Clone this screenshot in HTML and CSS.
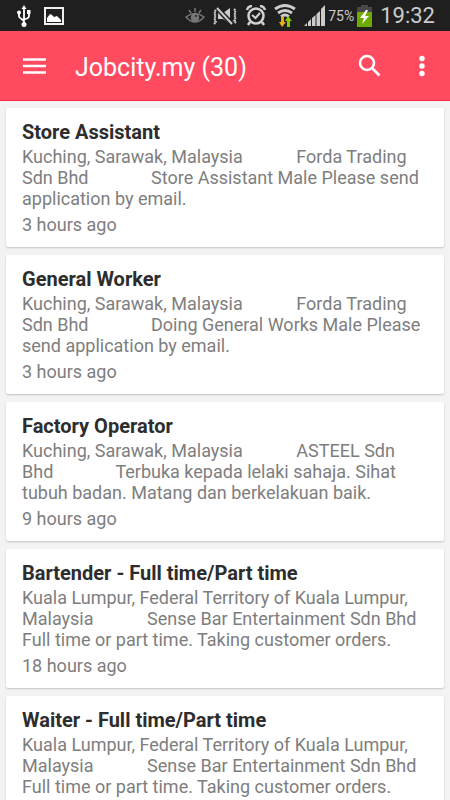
FILE: index.html
```html
<!DOCTYPE html>
<html lang="en">
<head>
<meta charset="utf-8">
<meta name="viewport" content="width=device-width, initial-scale=1">
<title>Jobcity.my</title>
<link rel="stylesheet" href="styles.css">
</head>
<body>
<div class="status">
  <svg class="usb" width="16" height="24" viewBox="0 0 16 24" fill="none" stroke="#fff" stroke-width="1.800"><path d="M8 4v16M3 9v3q0 2 2 2.500L8 17M13 8v4q0 2-2 2.500L8 15.500"/><path d="M8 1l2.500 4h-5z" fill="#fff" stroke="none"/><circle cx="8" cy="20.500" r="2.500" fill="#fff" stroke="none"/><circle cx="3" cy="8.500" r="2" fill="#fff" stroke="none"/><path d="M11 6h3.500v4H11z" fill="#fff" stroke="none"/></svg>
  <svg class="photo" width="20" height="18" viewBox="0 0 20 18"><path d="M1 1h18v16H1z" fill="none" stroke="#eee" stroke-width="2"/><path d="M3 15v-4l3-4 2 1 2 2 3-1 4 4v2z" fill="#fff"/></svg>
  <svg class="eye" width="20" height="16" viewBox="0 0 20 16" fill="none" stroke="#777" stroke-width="1.500"><path d="M1 9q9-7 18 0-9 10-18 0zM10 0v4M4 2l2 3M16 2l-2 3"/><circle cx="10" cy="9.500" r="3.500" fill="#777"/><circle cx="11" cy="8" r="1" fill="#222" stroke="none"/></svg>
  <svg class="mute" width="26" height="20" viewBox="0 0 26 20" fill="none" stroke="#ccc"><path d="M6 7h5l7-5v16l-7-5H6z" fill="#ccc" stroke="none"/><path d="M4 1l16 17" stroke="#222" stroke-width="5"/><path d="M5 2l15 16" stroke-width="2"/><path d="M4 4L2 6l2 2-2 2 2 2-2 2 2 2-2 2M22 3l2 2-2 2 2 2-2 2 2 2-2 2 2 2" stroke-width="2" stroke-dasharray="2 1"/></svg>
  <svg class="alarm" width="20" height="22" viewBox="0 0 20 22" fill="none" stroke="#d2d2d2" stroke-width="2.500"><circle cx="10" cy="11" r="7.500"/><path d="M6 10l3.500 3L14 8" stroke-width="2"/><path d="M1 5q1-4 5-4M19 5q-1-4-5-4M4 17l-2 3M16 17l2 3"/></svg>
  <svg class="wifi" width="22" height="24" viewBox="0 0 22 24" fill="none" stroke="#ccc" stroke-width="2.800"><path d="M1 5q10-7 20 0M4 9q7-5 14 0M7 12.500q4-3 8 0"/><path d="M7 13h3v5h2l-4 5-3-5h2z" fill="#e5ae12" stroke="none"/><path d="M14 12l4 5h-2v6h-3v-6h-2z" fill="#8bc800" stroke="none"/></svg>
  <svg class="signal" width="22" height="21" viewBox="0 0 22 21" fill="#ccc"><path d="M0 21l3-3v3zM4 21v-4l3-3v7zM8 21v-8l3.500-3v11zM12.500 21V9L16 6v15zM17 21V4l4-4v21z"/></svg>
  <span class="percent">75%</span>
  <svg class="battery" width="15" height="22" viewBox="0 0 15 22"><path d="M4 0h7v2h4v20H0V2h4z" fill="#484848"/><path d="M0 7h15v15H0z" fill="#6faa00"/><path d="M9 5l-6 8h4l-2 6 7-8H8l3-6z" fill="#fff"/></svg>
  <span class="clock">19:32</span>
</div>
<header class="bar">
  <button class="icon" aria-label="Menu"><svg width="24" height="18" viewBox="0 0 24 18" stroke="#fff" stroke-width="2.500"><path d="M0 2.500h23M0 9h23M0 15.500h23"/></svg></button>
  <h1>Jobcity.my (30)</h1>
  <button class="icon" aria-label="Search"><svg width="24" height="24" viewBox="0 0 24 24" fill="none" stroke="#fff" stroke-width="2.600"><circle cx="9" cy="9" r="7"/><path d="M13.500 13.500l8 8"/></svg></button>
  <button class="icon more" aria-label="More options"><svg width="6" height="22" viewBox="0 0 6 22" fill="#fff"><circle cx="3" cy="3.500" r="2.700"/><circle cx="3" cy="11" r="2.700"/><circle cx="3" cy="18.500" r="2.700"/></svg></button>
</header>
<main class="jobs">
  <article class="card">
    <h2>Store Assistant</h2>
    <p class="detail">Kuching, Sarawak, Malaysia            Forda Trading Sdn Bhd              Store Assistant Male Please send application by email.</p>
    <p class="time">3 hours ago</p>
  </article>
  <article class="card">
    <h2>General Worker</h2>
    <p class="detail">Kuching, Sarawak, Malaysia            Forda Trading Sdn Bhd              Doing General Works Male Please send application by email.</p>
    <p class="time">3 hours ago</p>
  </article>
  <article class="card">
    <h2>Factory Operator</h2>
    <p class="detail">Kuching, Sarawak, Malaysia            ASTEEL Sdn Bhd              Terbuka kepada lelaki sahaja. Sihat tubuh badan. Matang dan berkelakuan baik.</p>
    <p class="time">9 hours ago</p>
  </article>
  <article class="card">
    <h2>Bartender - Full time/Part time</h2>
    <p class="detail">Kuala Lumpur, Federal Territory of Kuala Lumpur, Malaysia            Sense Bar Entertainment Sdn Bhd Full time or part time. Taking customer orders.</p>
    <p class="time">18 hours ago</p>
  </article>
  <article class="card">
    <h2>Waiter - Full time/Part time</h2>
    <p class="detail">Kuala Lumpur, Federal Territory of Kuala Lumpur, Malaysia            Sense Bar Entertainment Sdn Bhd Full time or part time. Taking customer orders.</p>
  </article>
</main>
</body>
</html>
```
FILE: styles.css
```css
* { box-sizing: border-box; }
html { height: 100%; overflow: hidden; }
body {
  margin: 0;
  height: 100%;
  overflow: hidden;
  display: flex;
  flex-direction: column;
  background: #f3f3f3;
  font-family: Roboto, sans-serif;
}
.status {
  flex: none;
  display: flex;
  align-items: center;
  height: 31px;
  padding: 0 15px 0 16px;
  background: #1f1f1f;
  color: #ccc;
}
.status svg { flex: none; }
.photo { margin-left: 12px; }
.eye { margin-left: auto; }
.mute { margin-left: 7px; }
.alarm { margin-left: 8px; }
.wifi { margin-left: 8px; }
.signal { margin-left: 8px; }
.percent { margin-left: 2px; font-size: 14px; }
.battery { margin-left: 3px; }
.clock { margin-left: 8px; font-size: 22px; }
.bar {
  flex: none;
  display: flex;
  align-items: center;
  height: 70px;
  padding: 0 16px 0 11px;
  background: #ff4a5f;
  border-bottom: 1px solid #ff2846;
  color: #fff;
}
.bar h1 {
  flex: 1;
  margin: 0 0 0 16px;
  padding-top: 4px;
  font-size: 25px;
  line-height: 32px;
  font-weight: 400;
}
.icon {
  display: flex;
  align-items: center;
  justify-content: center;
  width: 48px;
  height: 48px;
  padding: 0;
  border: 0;
  background: none;
}
.more { width: 24px; margin-left: 16px; }
.jobs {
  flex: 1;
  min-height: 0;
  overflow: hidden;
  padding: 7px 6px 0;
}
.card {
  margin-bottom: 8px;
  padding: 11px 16px 12px;
  background: #fff;
  border-radius: 2px;
  box-shadow: 0 1px 2px rgba(0, 0, 0, 0.2);
}
.card h2 {
  margin: 0;
  font-size: 20px;
  line-height: 27px;
  font-weight: 700;
  color: #2d2d2d;
}
.card p {
  margin: 0;
  font-size: 18px;
  line-height: 21px;
  color: #7e7e7e;
}
.detail { white-space: pre-wrap; }
.card .time { padding-top: 5px; }
```
